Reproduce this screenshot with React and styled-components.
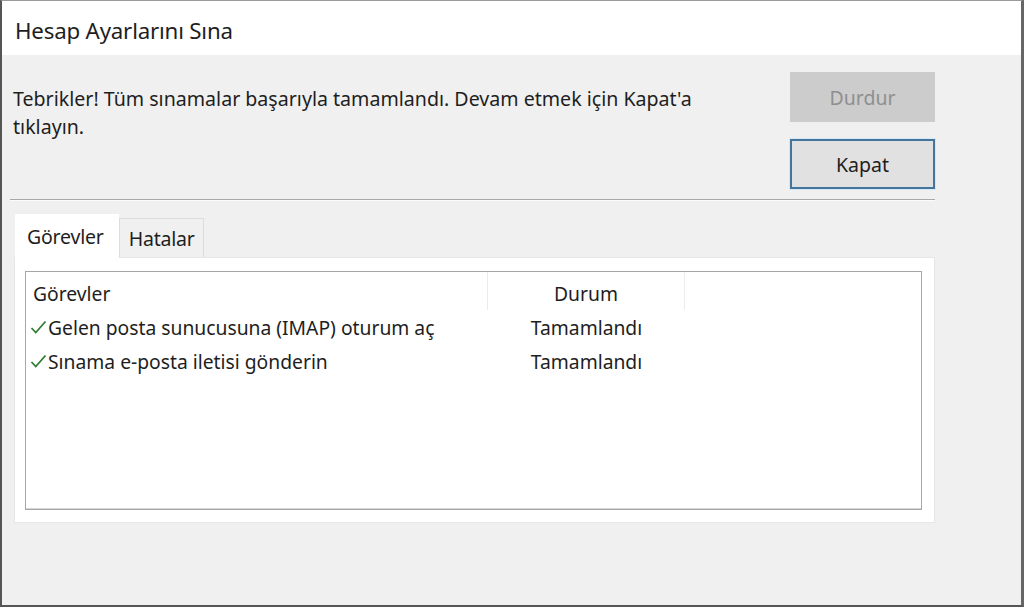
import React from "react";
import styled, { createGlobalStyle } from "styled-components";

const GlobalStyle = createGlobalStyle`
  html, body {
    margin: 0;
    padding: 0;
    background: #f0f0f0;
  }
  * {
    box-sizing: border-box;
  }
`;

const Window = styled.div`
  width: 1024px;
  height: 607px;
  display: flex;
  flex-direction: column;
  background: #f0f0f0;
  border-top: 1px solid #9a9a9a;
  border-left: 2px solid #555;
  border-right: 3px solid #666;
  border-bottom: 2px solid #555;
  font-family: "Noto Sans", "Open Sans", sans-serif;
  color: #1e1e1e;
  overflow: hidden;
`;

const TitleBar = styled.div`
  height: 54px;
  flex-shrink: 0;
  background: #fff;
  display: flex;
  align-items: center;
  padding-left: 13px;
  padding-top: 4px;
  font-size: 22.3px;
  letter-spacing: -0.2px;
`;

const Body = styled.div`
  flex: 1;
  padding: 17px 0 0 8px;
  display: flex;
  flex-direction: column;
`;

const TopRow = styled.div`
  display: flex;
  justify-content: space-between;
  width: 925px;
`;

const Message = styled.p`
  margin: 13px 0 0 3px;
  width: 700px;
  font-size: 19.6px;
  line-height: 28px;
`;

const ButtonColumn = styled.div`
  display: flex;
  flex-direction: column;
  gap: 17px;
`;

const Button = styled.button`
  width: 145px;
  height: 50px;
  font-family: inherit;
  font-size: 19.5px;
  border: ${(p) => (p.$focused ? "2px solid #46759c" : "none")};
  box-shadow: ${(p) => (p.$focused ? "0 0 0 1px #d2e8f8" : "none")};
  background: ${(p) => (p.$disabled ? "#cccccc" : "#e1e1e1")};
  color: ${(p) => (p.$disabled ? "#8f8f8f" : "#1e1e1e")};
  padding: 0;
`;

const Separator = styled.div`
  width: 925px;
  margin-top: 10px;
  border-top: 1px solid #a8a8a8;
  border-bottom: 1px solid #fbfbfb;
`;

const TabStrip = styled.div`
  display: flex;
  align-items: flex-end;
  margin: 12px 0 0 5px;
  height: 44px;
`;

const Tab = styled.div`
  height: ${(p) => (p.$active ? "44px" : "39px")};
  padding: ${(p) => (p.$active ? "8px 14px 0 11px" : "6px 8px 0 9px")};
  background: ${(p) => (p.$active ? "#fff" : "#f0f0f0")};
  border: 1px solid ${(p) => (p.$active ? "#fff" : "#dcdcdc")};
  border-bottom: none;
  font-size: 19.5px;
  letter-spacing: -0.2px;
  margin-bottom: ${(p) => (p.$active ? "-1px" : "0")};
  position: relative;
  z-index: ${(p) => (p.$active ? 1 : 0)};
`;

const TabPanel = styled.div`
  width: 921px;
  height: 266px;
  margin-left: 4px;
  background: #fff;
  border: 1px solid #e6e6e6;
  padding: 13px 12px 12px 10px;
`;

const ListView = styled.div`
  height: 100%;
  border: 1px solid #a6a6a6;
  box-shadow: inset 0 -1px 0 #d6d6d6;
  display: flex;
  flex-direction: column;
`;

const Row = styled.div`
  display: grid;
  grid-template-columns: 462px 197px 1fr;
  height: ${(p) => (p.$header ? "38px" : "34px")};
  align-items: center;
  font-size: 19.3px;
`;

const Cell = styled.div`
  height: 100%;
  display: flex;
  align-items: center;
  justify-content: ${(p) => (p.$center ? "center" : "flex-start")};
  padding-left: ${(p) => (p.$center ? "0" : p.$icon ? "4px" : "7px")};
  padding-top: ${(p) => (p.$header ? "4px" : "0")};
  border-right: ${(p) => (p.$divider ? "1px solid #ececec" : "none")};
  white-space: nowrap;
`;

const Check = () => (
  <svg width="17" height="15" viewBox="0 0 17 15" style={{ marginRight: 1 }}>
    <path d="M1.5 8 L5.8 12.5 L15.5 1.5" fill="none" stroke="#2f7d32" strokeWidth="1.8" />
  </svg>
);

const tasks = [
  { name: "Gelen posta sunucusuna (IMAP) oturum aç", status: "Tamamlandı" },
  { name: "Sınama e-posta iletisi gönderin", status: "Tamamlandı" },
];

export default function App() {
  return (
    <>
      <GlobalStyle />
      <Window>
        <TitleBar>Hesap Ayarlarını Sına</TitleBar>
        <Body>
          <TopRow>
            <Message>
              Tebrikler! Tüm sınamalar başarıyla tamamlandı. Devam etmek için Kapat'a tıklayın.
            </Message>
            <ButtonColumn>
              <Button $disabled>Durdur</Button>
              <Button $focused>Kapat</Button>
            </ButtonColumn>
          </TopRow>
          <Separator />
          <TabStrip>
            <Tab $active>Görevler</Tab>
            <Tab>Hatalar</Tab>
          </TabStrip>
          <TabPanel>
            <ListView>
              <Row $header>
                <Cell $header $divider>Görevler</Cell>
                <Cell $header $center $divider>Durum</Cell>
                <Cell />
              </Row>
              {tasks.map((t) => (
                <Row key={t.name}>
                  <Cell $icon>
                    <Check />
                    {t.name}
                  </Cell>
                  <Cell $center>{t.status}</Cell>
                  <Cell />
                </Row>
              ))}
            </ListView>
          </TabPanel>
        </Body>
      </Window>
    </>
  );
}
